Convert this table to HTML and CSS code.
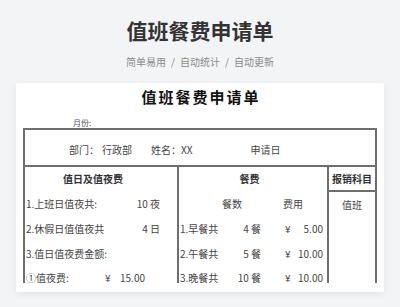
FILE: index.html
```html
<!DOCTYPE html>
<html lang="zh">
<head>
<meta charset="utf-8">
<link rel="stylesheet" href="styles.css">
</head>
<body>
<header class="hero">
  <h1 class="hero-title">值班餐费申请单</h1>
  <p class="hero-sub"><span>简单易用</span><span class="sep">/</span><span>自动统计</span><span class="sep">/</span><span>自动更新</span></p>
</header>
<main class="card">
  <div class="doc-title">值班餐费申请单</div>
  <div class="month">月份:</div>
  <div class="sheet-wrap">
    <div class="sheet">
      <div class="info-row">
        <span>部门：</span><span class="dept">行政部</span><span class="name-label">姓名：</span><span>XX</span><span class="apply">申请日</span>
      </div>
      <div class="cols">
        <div class="col col-left">
          <div class="cell head">值日及值夜费</div>
          <div class="cell row-split"><span>1.上班日值夜共:</span><span>10 夜</span></div>
          <div class="cell row-split"><span>2.休假日值值夜共</span><span>4 日</span></div>
          <div class="cell"><span>3.值日值夜费金额:</span></div>
          <div class="cell last"><span class="fee-label">①值夜费:</span><span class="yen">¥</span><span class="fee-amt">15.00</span></div>
        </div>
        <div class="col col-mid">
          <div class="cell head head-mid">餐费</div>
          <div class="cell"><span class="sub-h sub-count">餐数</span><span class="sub-h sub-cost">费用</span></div>
          <div class="cell"><span class="meal">1.早餐共</span><span class="count">4 餐</span><span class="m-yen">¥</span><span class="m-amt">5.00</span></div>
          <div class="cell"><span class="meal">2.午餐共</span><span class="count">5 餐</span><span class="m-yen">¥</span><span class="m-amt">10.00</span></div>
          <div class="cell last"><span class="meal">3.晚餐共</span><span class="count">10 餐</span><span class="m-yen">¥</span><span class="m-amt">10.00</span></div>
        </div>
        <div class="col col-right">
          <div class="cell head head-right">报销科目</div>
          <div class="cell center">值班</div>
        </div>
      </div>
    </div>
  </div>
</main>
</body>
</html>
```

FILE: styles.css
```css
* { box-sizing: border-box; }
html, body { margin: 0; padding: 0; }
body {
  background: #f3f4f6;
  font-family: "Noto Sans CJK SC", "Noto Sans", sans-serif;
  color: #444;
  width: 400px;
  height: 307px;
  overflow: hidden;
}
.hero { padding-top: 16px; text-align: center; }
.hero-title {
  margin: 0;
  font-size: 21px;
  line-height: 28px;
  font-weight: 700;
  color: #333;
}
.hero-sub {
  margin: 11px 0 0;
  font-size: 10px;
  line-height: 14px;
  color: #8a8a8a;
}
.hero-sub .sep { margin: 0 5px; }
.card {
  margin: 14px 16px 0;
  height: 209px;
  background: #fff;
  box-shadow: 0 2px 8px rgba(0, 0, 0, 0.07);
  padding: 0 7px 7px;
  display: flex;
  flex-direction: column;
}
.doc-title {
  padding-top: 4px;
  line-height: 20px;
  font-size: 15px;
  font-weight: 700;
  letter-spacing: 2px;
  color: #111;
  text-align: center;
  padding-left: 2px;
}
.month {
  padding-top: 10px;
  line-height: 11px;
  font-size: 8px;
  color: #555;
  padding-left: 50px;
}
.sheet-wrap { flex: 1; min-height: 0; overflow: hidden; }
.sheet {
  border: 2px solid #6e6e6e;
  border-bottom: none;
  font-size: 10px;
  color: #444;
}
.info-row {
  height: 37px;
  display: flex;
  align-items: center;
  padding-left: 44px;
  padding-top: 4px;
  border-bottom: 2px solid #6e6e6e;
  line-height: 12px;
}
.dept { margin-left: 3px; }
.name-label { margin-left: 19px; }
.apply { margin-left: 58px; }
.cols {
  display: grid;
  grid-template-columns: 152px 150px 48px;
}
.col-mid, .col-right { border-left: 2px solid #6e6e6e; }
.cell {
  height: 25px;
  display: flex;
  align-items: center;
  line-height: 10px;
  white-space: nowrap;
}
.cell.last { height: 17px; align-items: flex-end; }
.head {
  height: 24px;
  justify-content: center;
  font-weight: 700;
  color: #333;
}
.head-mid { padding-right: 8px; }
.head-right {
  height: 25px;
  border-bottom: 2px solid #6e6e6e;
}
.center { justify-content: center; }
.col-left .cell { padding-left: 1px; padding-right: 17px; }
.row-split { justify-content: space-between; }
.fee-label { width: 79px; }
.yen { width: 8px; }
.fee-amt { width: 32px; text-align: right; }
.col-mid .cell { padding-left: 1px; }
.sub-count { margin-left: 42px; }
.sub-cost { margin-left: 41px; }
.meal { width: 46px; }
.count { width: 35px; text-align: right; }
.m-yen { margin-left: 24px; width: 8px; }
.m-amt { width: 30px; text-align: right; }
```
